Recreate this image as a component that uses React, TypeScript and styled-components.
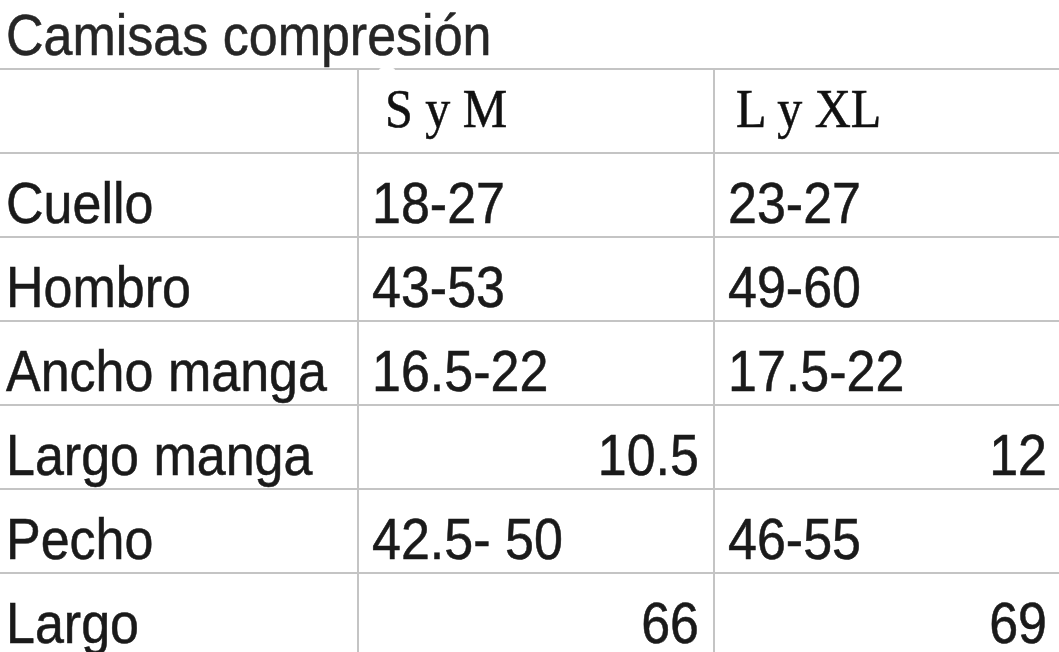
import React from 'react';
import styled, { createGlobalStyle } from 'styled-components';

const GlobalStyle = createGlobalStyle`
  html, body {
    margin: 0;
    padding: 0;
    background: #ffffff;
    overflow: hidden;
  }
`;

const Page = styled.div`
  width: 1059px;
  height: 652px;
  padding-top: 7px;
  box-sizing: border-box;
  overflow: hidden;
  font-family: 'Liberation Sans', Arial, sans-serif;
  color: #1a1a1a;
`;

const Title = styled.h1`
  margin: 0;
  padding-left: 6px;
  height: 61px;
  font-size: 52px;
  font-weight: 400;
  line-height: 60px;
  color: #262626;
  white-space: nowrap;
`;

const Grid = styled.div`
  display: grid;
  grid-template-columns: 357px 356px 348px;
  grid-auto-rows: 84px;
  width: 1061px;
`;

const Cell = styled.div<{ first?: boolean }>`
  position: relative;
  box-sizing: border-box;
  display: flex;
  align-items: flex-end;
  border-top: 2px solid #c4c4c4;
  border-left: ${(p) => (p.first ? 'none' : '2px solid #c4c4c4')};
  font-size: 52px;
  line-height: 60px;
  white-space: nowrap;
`;

const HeadCell = styled(Cell)<{ indent: number }>`
  padding-left: ${(p) => p.indent}px;
  padding-bottom: 12px;
  font-family: 'Liberation Serif', 'Times New Roman', serif;
  font-size: 50px;
  color: #111111;
`;

const LabelCell = styled(Cell)`
  padding-left: 6px;
  padding-bottom: 1px;
`;

const ValueCell = styled(Cell)<{ end?: boolean }>`
  justify-content: ${(p) => (p.end ? 'flex-end' : 'flex-start')};
  padding-left: 13px;
  padding-right: 14px;
  padding-bottom: 1px;
`;

// the photo is slightly stretched vertically and its strokes look heavier
const Txt = styled.span`
  display: inline-block;
  transform: scaleY(1.1);
  transform-origin: left 78%;
  -webkit-text-stroke: 0.5px currentColor;
`;

// white retouch patch left on the scanned header row
const Patch = styled.span<{ left: number; top?: number; bottom?: number; w: number }>`
  position: absolute;
  left: ${(p) => p.left}px;
  ${(p) => (p.top !== undefined ? `top: ${p.top}px;` : '')}
  ${(p) => (p.bottom !== undefined ? `bottom: ${p.bottom}px;` : '')}
  width: ${(p) => p.w}px;
  height: 5px;
  background: #ffffff;
  border-radius: 3px;
`;

type Row = { label: string; a: string; b: string; end?: boolean };

const rows: Row[] = [
  { label: 'Cuello', a: '18-27', b: '23-27' },
  { label: 'Hombro', a: '43-53', b: '49-60' },
  { label: 'Ancho manga', a: '16.5-22', b: '17.5-22' },
  { label: 'Largo manga', a: '10.5', b: '12', end: true },
  { label: 'Pecho', a: '42.5- 50', b: '46-55' },
  { label: 'Largo', a: '66', b: '69', end: true },
];

export default function App() {
  return (
    <Page>
      <GlobalStyle />
      <Title>
        <Txt>Camisas compresión</Txt>
      </Title>
      <Grid>
        <LabelCell first />
        <HeadCell indent={26}>
          <Patch left={20} top={-2} w={16} />
          <Txt>S y M</Txt>
        </HeadCell>
        <HeadCell indent={21}>
          <Patch left={16} bottom={-4} w={28} />
          <Txt>L y XL</Txt>
        </HeadCell>
        {rows.map((r) => (
          <React.Fragment key={r.label}>
            <LabelCell first>
              <Txt>{r.label}</Txt>
            </LabelCell>
            <ValueCell end={r.end}>
              <Txt>{r.a}</Txt>
            </ValueCell>
            <ValueCell end={r.end}>
              <Txt>{r.b}</Txt>
            </ValueCell>
          </React.Fragment>
        ))}
      </Grid>
    </Page>
  );
}
